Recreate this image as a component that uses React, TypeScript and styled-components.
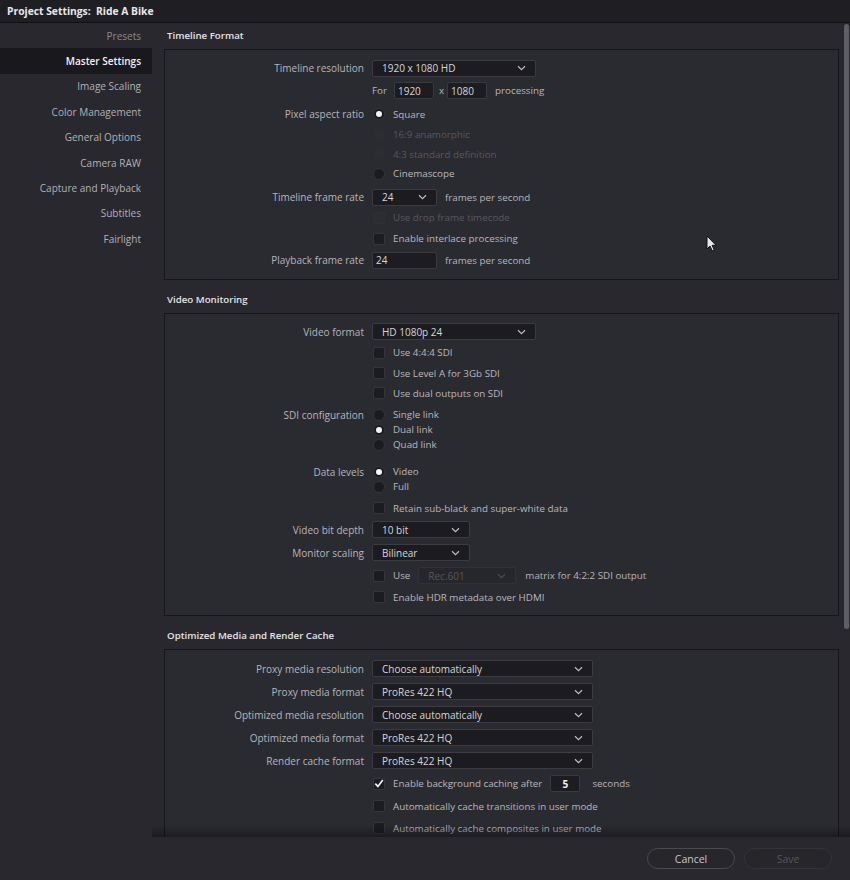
import React from 'react';
import styled, {createGlobalStyle} from 'styled-components';

const GlobalStyle = createGlobalStyle`
    html, body {
        margin: 0;
        padding: 0;
        background: #28282e;
    }
    body {
        font-family: 'Open Sans', 'Liberation Sans', sans-serif;
        font-size: 10px;
        color: #b4b4b8;
    }
    * {
        box-sizing: border-box;
    }
`;

const Window = styled.div`
    position: relative;
    width: 850px;
    height: 880px;
    display: flex;
    flex-direction: column;
    overflow: hidden;
    background: #28282e;
`;

const TitleBar = styled.div`
    height: 23px;
    flex-shrink: 0;
    padding-left: 7px;
    line-height: 22px;
    background: #1f1f23;
    border-bottom: 1px solid #111114;
    color: #e8e8ea;
    font-size: 10.3px;
    font-weight: 700;
    white-space: pre;
`;

const Body = styled.div`
    flex: 1;
    display: flex;
    min-height: 0;
`;

const Sidebar = styled.nav`
    width: 152px;
    flex-shrink: 0;
    display: flex;
    flex-direction: column;
`;

const NavItem = styled.div<{$active?: boolean; $dim?: boolean}>`
    height: 25.4px;
    flex-shrink: 0;
    display: flex;
    align-items: center;
    justify-content: flex-end;
    padding-right: 11px;
    font-size: 10px;
    background: ${(p) => (p.$active ? '#19191d' : 'transparent')};
    color: ${(p) => (p.$active ? '#f2f2f4' : p.$dim ? '#8a8a90' : '#b2b2b6')};
    font-weight: ${(p) => (p.$active ? 600 : 400)};
`;

const Main = styled.main`
    position: relative;
    flex: 1;
    overflow: hidden;
`;

const Content = styled.div`
    padding: 0 11px 0 12px;
`;

const SectionTitle = styled.div<{$first?: boolean}>`
    margin-top: ${(p) => (p.$first ? 4 : 11)}px;
    margin-bottom: 4px;
    padding-left: 3px;
    line-height: 18px;
    font-size: 9.7px;
    font-weight: 600;
    color: #e4e4e6;
`;

const Panel = styled.section`
    border: 1px solid #16161a;
    background: #2a2a31;
    padding: 7px 0 8px;
`;

const Row = styled.div<{$h: number; $mt?: number}>`
    display: grid;
    grid-template-columns: 199px 1fr;
    column-gap: 8px;
    align-items: center;
    height: ${(p) => p.$h}px;
    margin-top: ${(p) => p.$mt ?? 0}px;
`;

const Label = styled.div`
    text-align: right;
    white-space: nowrap;
    color: #b6b6ba;
`;

const Control = styled.div`
    display: flex;
    align-items: center;
    white-space: nowrap;
    font-size: 9.8px;
`;

const Text = styled.span<{$ml?: number; $off?: boolean}>`
    margin-left: ${(p) => p.$ml ?? 0}px;
    color: ${(p) => (p.$off ? '#5a5a60' : '#b6b6ba')};
`;

const SelectBox = styled.div<{$w: number; $ml?: number; $off?: boolean}>`
    width: ${(p) => p.$w}px;
    height: 17px;
    margin-left: ${(p) => p.$ml ?? 0}px;
    display: flex;
    align-items: center;
    justify-content: space-between;
    padding: 0 9px 0 9px;
    border-radius: 2px;
    font-size: 10px;
    background: ${(p) => (p.$off ? '#26262b' : '#1c1c20')};
    border: 1px solid ${(p) => (p.$off ? '#313137' : '#3b3b41')};
    color: ${(p) => (p.$off ? '#56565c' : '#d6d6d8')};

    svg path {
        stroke: ${(p) => (p.$off ? '#4a4a50' : '#bdbdc1')};
    }
`;

const Field = styled.div<{$w: number; $ml?: number; $center?: boolean}>`
    width: ${(p) => p.$w}px;
    height: 17px;
    margin-left: ${(p) => p.$ml ?? 0}px;
    display: flex;
    align-items: center;
    justify-content: ${(p) => (p.$center ? 'center' : 'flex-start')};
    padding-left: ${(p) => (p.$center ? 0 : 3)}px;
    border-radius: 2px;
    font-size: 10px;
    background: #1d1d21;
    border: 1px solid #39393f;
    color: ${(p) => (p.$center ? '#f0f0f2' : '#d6d6d8')};
    font-weight: ${(p) => (p.$center ? 700 : 400)};
`;

const RadioDot = styled.span<{$on?: boolean; $off?: boolean}>`
    position: relative;
    width: 12px;
    height: 12px;
    margin-left: 1px;
    flex-shrink: 0;
    border-radius: 50%;
    background: ${(p) => (p.$off ? '#2c2c32' : '#1b1b1f')};
    border: 1px solid ${(p) => (p.$off ? '#2c2c32' : '#34343a')};

    &::after {
        content: '';
        display: ${(p) => (p.$on ? 'block' : 'none')};
        position: absolute;
        left: 2px;
        top: 2px;
        width: 6px;
        height: 6px;
        border-radius: 50%;
        background: #f4f4f6;
    }
`;

const CheckBox = styled.span<{$off?: boolean}>`
    width: 12px;
    height: 12px;
    margin-left: 1px;
    flex-shrink: 0;
    display: flex;
    align-items: center;
    justify-content: center;
    border-radius: 2px;
    background: ${(p) => (p.$off ? '#2c2c32' : '#1c1c20')};
    border: 1px solid ${(p) => (p.$off ? '#2f2f35' : '#35353b')};
`;

const OptionText = styled.span<{$off?: boolean}>`
    margin-left: 8px;
    color: ${(p) => (p.$off ? '#58585e' : '#b8b8bc')};
`;

const ScrollThumb = styled.div`
    position: absolute;
    top: 1px;
    right: 1px;
    width: 5px;
    height: 605px;
    border-radius: 3px;
    background: #5e5e66;
`;

const BottomShade = styled.div`
    position: absolute;
    left: 0;
    right: 0;
    bottom: 0;
    height: 12px;
    background: linear-gradient(to bottom, rgba(10, 10, 14, 0), rgba(10, 10, 14, 0.45));
    pointer-events: none;
`;

const Footer = styled.footer`
    height: 43px;
    flex-shrink: 0;
    display: flex;
    align-items: center;
    justify-content: flex-end;
    gap: 9px;
    padding-right: 18px;
    background: #28282e;
`;

const Button = styled.button<{$off?: boolean}>`
    width: 88px;
    height: 21px;
    padding: 0;
    border-radius: 11px;
    font-family: inherit;
    font-size: 10.5px;
    background: #26262b;
    border: 1px solid ${(p) => (p.$off ? '#34343a' : '#4a4a51')};
    color: ${(p) => (p.$off ? '#55555b' : '#c8c8cc')};
`;

const Cursor = styled.svg`
    position: absolute;
    left: 706px;
    top: 235px;
`;

const Chevron = () => (
    <svg width='9' height='6' viewBox='0 0 9 6'>
        <path d='M1 1.2l3.5 3.4 3.5-3.4' fill='none' strokeWidth='1.2' />
    </svg>
);

const Select = ({w, value, ml, off}: {w: number; value: string; ml?: number; off?: boolean}) => (
    <SelectBox $w={w} $ml={ml} $off={off}>
        <span>{value}</span>
        <Chevron />
    </SelectBox>
);

const Radio = ({text, on, off}: {text: string; on?: boolean; off?: boolean}) => (
    <Control>
        <RadioDot $on={on} $off={off} />
        <OptionText $off={off}>{text}</OptionText>
    </Control>
);

const Check = ({text, on, off, children}: {text: string; on?: boolean; off?: boolean; children?: React.ReactNode}) => (
    <Control>
        <CheckBox $off={off}>
            {on && (
                <svg width='10' height='9' viewBox='0 0 10 9'>
                    <path d='M1.3 4.6l2.6 2.8L8.8 1' fill='none' stroke='#f4f4f6' strokeWidth='1.7' />
                </svg>
            )}
        </CheckBox>
        <OptionText $off={off}>{text}</OptionText>
        {children}
    </Control>
);

const navItems = [
    'Presets',
    'Master Settings',
    'Image Scaling',
    'Color Management',
    'General Options',
    'Camera RAW',
    'Capture and Playback',
    'Subtitles',
    'Fairlight',
];

const cacheSelects = [
    ['Proxy media resolution', 'Choose automatically'],
    ['Proxy media format', 'ProRes 422 HQ'],
    ['Optimized media resolution', 'Choose automatically'],
    ['Optimized media format', 'ProRes 422 HQ'],
    ['Render cache format', 'ProRes 422 HQ'],
];

const App = () => {
    return (
        <Window>
            <GlobalStyle />
            <TitleBar>{'Project Settings:  Ride A Bike'}</TitleBar>
            <Body>
                <Sidebar>
                    {navItems.map((item, i) => (
                        <NavItem
                            key={item}
                            $active={i === 1}
                            $dim={i === 0}
                        >
                            {item}
                        </NavItem>
                    ))}
                </Sidebar>
                <Main>
                    <Content>
                        <SectionTitle $first={true}>{'Timeline Format'}</SectionTitle>
                        <Panel>
                            <Row $h={22}>
                                <Label>{'Timeline resolution'}</Label>
                                <Control><Select w={164} value='1920 x 1080 HD' /></Control>
                            </Row>
                            <Row $h={23}>
                                <div />
                                <Control>
                                    <Text>{'For'}</Text>
                                    <Field $w={40} $ml={7}>{'1920'}</Field>
                                    <Text $ml={5}>{'x'}</Text>
                                    <Field $w={40} $ml={3}>{'1080'}</Field>
                                    <Text $ml={8}>{'processing'}</Text>
                                </Control>
                            </Row>
                            <Row $h={20} $mt={2}>
                                <Label>{'Pixel aspect ratio'}</Label>
                                <Radio text='Square' on={true} />
                            </Row>
                            <Row $h={20}>
                                <div />
                                <Radio text='16:9 anamorphic' off={true} />
                            </Row>
                            <Row $h={20}>
                                <div />
                                <Radio text='4:3 standard definition' off={true} />
                            </Row>
                            <Row $h={19}>
                                <div />
                                <Radio text='Cinemascope' />
                            </Row>
                            <Row $h={20} $mt={4}>
                                <Label>{'Timeline frame rate'}</Label>
                                <Control>
                                    <Select w={65} value='24' />
                                    <Text $ml={8}>{'frames per second'}</Text>
                                </Control>
                            </Row>
                            <Row $h={21}>
                                <div />
                                <Check text='Use drop frame timecode' off={true} />
                            </Row>
                            <Row $h={21}>
                                <div />
                                <Check text='Enable interlace processing' />
                            </Row>
                            <Row $h={22}>
                                <Label>{'Playback frame rate'}</Label>
                                <Control>
                                    <Field $w={65}>{'24'}</Field>
                                    <Text $ml={8}>{'frames per second'}</Text>
                                </Control>
                            </Row>
                        </Panel>

                        <SectionTitle>{'Video Monitoring'}</SectionTitle>
                        <Panel>
                            <Row $h={21}>
                                <Label>{'Video format'}</Label>
                                <Control><Select w={164} value='HD 1080p 24' /></Control>
                            </Row>
                            <Row $h={21}>
                                <div />
                                <Check text='Use 4:4:4 SDI' />
                            </Row>
                            <Row $h={20}>
                                <div />
                                <Check text='Use Level A for 3Gb SDI' />
                            </Row>
                            <Row $h={20}>
                                <div />
                                <Check text='Use dual outputs on SDI' />
                            </Row>
                            <Row $h={15} $mt={4}>
                                <Label>{'SDI configuration'}</Label>
                                <Radio text='Single link' />
                            </Row>
                            <Row $h={15}>
                                <div />
                                <Radio text='Dual link' on={true} />
                            </Row>
                            <Row $h={15}>
                                <div />
                                <Radio text='Quad link' />
                            </Row>
                            <Row $h={15} $mt={12}>
                                <Label>{'Data levels'}</Label>
                                <Radio text='Video' on={true} />
                            </Row>
                            <Row $h={15}>
                                <div />
                                <Radio text='Full' />
                            </Row>
                            <Row $h={20} $mt={4}>
                                <div />
                                <Check text='Retain sub-black and super-white data' />
                            </Row>
                            <Row $h={23}>
                                <Label>{'Video bit depth'}</Label>
                                <Control><Select w={98} value='10 bit' /></Control>
                            </Row>
                            <Row $h={23}>
                                <Label>{'Monitor scaling'}</Label>
                                <Control><Select w={98} value='Bilinear' /></Control>
                            </Row>
                            <Row $h={23}>
                                <div />
                                <Check text='Use'>
                                    <Select w={98} ml={8} value='Rec.601' off={true} />
                                    <Text $ml={9}>{'matrix for 4:2:2 SDI output'}</Text>
                                </Check>
                            </Row>
                            <Row $h={20}>
                                <div />
                                <Check text='Enable HDR metadata over HDMI' />
                            </Row>
                        </Panel>

                        <SectionTitle>{'Optimized Media and Render Cache'}</SectionTitle>
                        <Panel>
                            {cacheSelects.map(([label, value]) => (
                                <Row key={label} $h={23}>
                                    <Label>{label}</Label>
                                    <Control><Select w={221} value={value} /></Control>
                                </Row>
                            ))}
                            <Row $h={23}>
                                <div />
                                <Check text='Enable background caching after' on={true}>
                                    <Field $w={30} $ml={8} $center={true}>{'5'}</Field>
                                    <Text $ml={12}>{'seconds'}</Text>
                                </Check>
                            </Row>
                            <Row $h={22}>
                                <div />
                                <Check text='Automatically cache transitions in user mode' />
                            </Row>
                            <Row $h={22}>
                                <div />
                                <Check text='Automatically cache composites in user mode' />
                            </Row>
                        </Panel>
                    </Content>
                    <ScrollThumb />
                    <BottomShade />
                </Main>
            </Body>
            <Footer>
                <Button>{'Cancel'}</Button>
                <Button $off={true}>{'Save'}</Button>
            </Footer>
            <Cursor width='12' height='17' viewBox='0 0 12 17'>
                <path
                    d='M1 1v13l3-3 2.2 4.8 2-0.9-2.1-4.6H10z'
                    fill='#e8e8ea'
                    stroke='#111'
                    strokeWidth='1'
                    strokeLinejoin='round'
                />
            </Cursor>
        </Window>
    );
};

export default App;
